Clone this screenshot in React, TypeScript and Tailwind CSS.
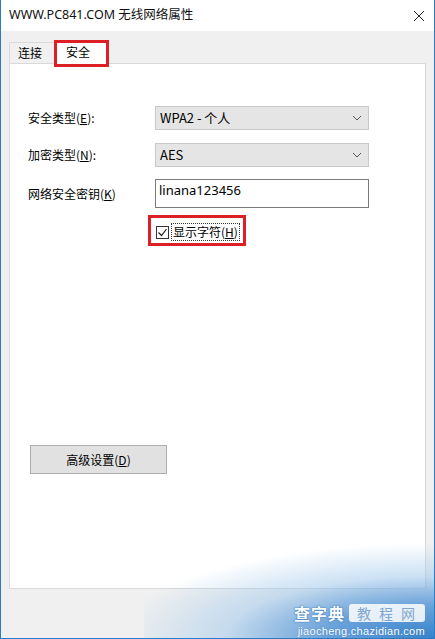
import React from "react";

const cjk = { fontFamily: '"Noto Sans CJK SC", "Noto Sans", sans-serif' };
const latin = { fontFamily: '"Segoe UI", "Noto Sans", "Noto Sans CJK SC", sans-serif' };

function Chevron() {
  return (
    <svg width="10" height="6" viewBox="0 0 10 6" className="block">
      <path d="M1 1 L5 5 L9 1" fill="none" stroke="#555" strokeWidth="1" />
    </svg>
  );
}

function Select({ value }: { value: string }) {
  return (
    <div className="flex h-[24px] w-[214px] items-center justify-between border border-[#c9c9c9] bg-[#e5e5e5] pl-[4px] pr-[6px] text-[13px] text-black">
      <span>{value}</span>
      <Chevron />
    </div>
  );
}

export default function App() {
  return (
    <div
      className="relative flex h-[639px] w-[435px] flex-col overflow-hidden border-x border-b border-[#2b7cc6] bg-[#f0f0f0]"
      style={cjk}
    >
      {/* title bar */}
      <div className="flex h-[31px] items-center justify-between bg-white pl-[8px] pr-[9px]">
        <span className="text-[12.5px] text-[#111]" style={latin}>
          WWW.PC841.COM 无线网络属性
        </span>
        <svg width="12" height="12" viewBox="0 0 12 12">
          <path d="M1 1 L11 11 M11 1 L1 11" stroke="#222" strokeWidth="1" />
        </svg>
      </div>

      {/* tabs */}
      <div className="mt-[9px] flex items-end pl-[8px]">
        <div className="flex h-[21px] w-[46px] items-center justify-center border border-b-0 border-[#d9d9d9] bg-[#f0f0f0] pr-[4px] text-[12px] text-black">
          连接
        </div>
        <div className="relative -mb-px flex h-[24px] w-[53px] items-center justify-center border border-b-0 border-l-0 border-[#d9d9d9] bg-white pb-[2px] pr-[6px] text-[12px] text-black">
          安全
          <div className="pointer-events-none absolute left-[-1px] top-[-1px] h-[27px] w-[55px] border-[3px] border-[#dd1f26]" />
        </div>
      </div>

      {/* panel */}
      <div className="mx-[8px] flex h-[526px] w-[417px] flex-col border border-[#d9d9d9] bg-white pl-[18px] pt-[42px]">
        <div className="flex items-center">
          <span className="w-[127px] text-[12px] text-black">安全类型(<span className="underline">E</span>):</span>
          <Select value="WPA2 - 个人" />
        </div>
        <div className="mt-[13px] flex items-center">
          <span className="w-[127px] text-[12px] text-black">加密类型(<span className="underline">N</span>):</span>
          <Select value="AES" />
        </div>
        <div className="mt-[12px] flex items-center">
          <span className="w-[127px] text-[12px] text-black">网络安全密钥(<span className="underline">K</span>)</span>
          <div className="flex h-[29px] w-[214px] items-center border border-[#7a7a7a] bg-white pb-[6px] pl-[3px] text-[13px] text-black" style={latin}>
            linana123456
          </div>
        </div>
        <div className="relative ml-[128px] mt-[15px] flex h-[18px] items-center">
          <div className="flex h-[13px] w-[13px] items-center justify-center border border-[#333] bg-white">
            <svg width="11" height="11" viewBox="0 0 11 11">
              <path d="M1.5 5.5 L4.5 8.5 L9.5 2" fill="none" stroke="#222" strokeWidth="1.2" />
            </svg>
          </div>
          <span className="ml-[2px] border border-dotted border-[#333] px-[1px] text-[12px] leading-[16px] text-black">
            显示字符(<span className="underline">H</span>)
          </span>
          <div className="pointer-events-none absolute left-[-8px] top-[-8px] h-[31px] w-[98px] border-[3px] border-[#dd1f26]" />
        </div>

        <div className="ml-[2px] mt-[204px] flex h-[29px] w-[137px] items-center justify-center border border-[#adadad] bg-[#e1e1e1] text-[12px] text-black">
          高级设置(<span className="underline">D</span>)
        </div>
      </div>

      {/* watermark */}
      <div
        className="pointer-events-none absolute bottom-0 right-0 h-[95px] w-[290px]"
        style={{
          background:
            "radial-gradient(ellipse 110% 100% at 100% 100%, rgba(45,125,200,0.95) 0%, rgba(85,150,215,0.85) 35%, rgba(160,200,235,0.55) 65%, rgba(255,255,255,0) 100%)",
        }}
      />
      <div className="pointer-events-none absolute bottom-[1px] right-[9px] flex flex-col items-end gap-[2px]">
        <div className="flex items-center">
          <span className="text-[16px] font-bold leading-[20px] tracking-[1px] text-white" style={{ textShadow: "0 0 2px #3a78b8, 0 0 1px #3a78b8" }}>
            查字典
          </span>
          <span className="ml-[4px] rounded-[3px] bg-white/85 pl-[8px] pr-[2px] text-[14px] leading-[18px] tracking-[8px] text-[#7ea6cf]">
            教程网
          </span>
        </div>
        <span className="text-[11px] leading-[12px] tracking-[0.3px] text-white" style={{ fontFamily: '"Liberation Sans", sans-serif', textShadow: "0 0 1px #3a78b8" }}>
          jiaocheng.chazidian.com
        </span>
      </div>
    </div>
  );
}
